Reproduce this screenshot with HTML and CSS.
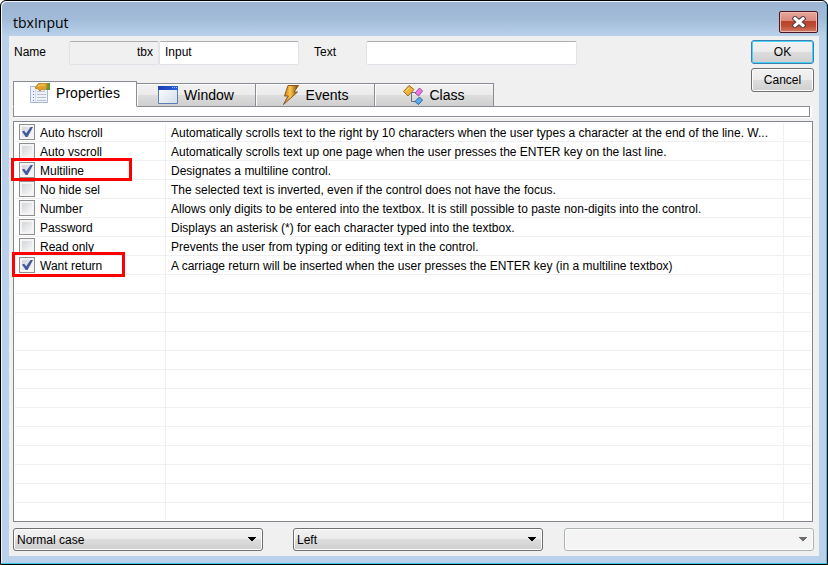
FILE: index.html
```html
<!DOCTYPE html>
<html lang="en">
	<head>
		<meta charset="utf-8">
		<title>tbxInput</title>
		<link rel="stylesheet" href="styles.css">
	</head>
	<body>
		<form class="window">
			<header class="titlebar">
				<h1>tbxInput</h1>
				<button type="button" class="close" aria-label="Close">
					<svg width="14" height="12" viewBox="0 0 14 12"><path d="M3 2.5 L11 9.5 M11 2.5 L3 9.5" stroke="#4f3f48" stroke-width="5" stroke-linecap="square"/><path d="M3 2.5 L11 9.5 M11 2.5 L3 9.5" stroke="#fff" stroke-width="3" stroke-linecap="square"/></svg>
				</button>
			</header>

			<main class="client">
				<div class="top">
					<div class="fields">
						<label class="name-label" for="name">Name</label>
						<input class="prefix" type="text" value="tbx" aria-label="Prefix" readonly>
						<input class="name" id="name" type="text" value="Input">
						<label class="text-label" for="text">Text</label>
						<input class="text" id="text" type="text">
					</div>
					<div class="buttons">
						<button type="submit" class="default">OK</button>
						<button type="button">Cancel</button>
					</div>
				</div>

				<nav class="tabs">
					<button type="button" class="tab active">
						<svg width="20" height="20" viewBox="0 0 20 20">
							<path d="M.5 3.5h17v16H.5z" fill="#eef3fb" stroke="#a9b7cf"/>
							<path d="M5.5 4v15" stroke="#d3dcea"/>
							<path d="M3 8.5h1M3 11.5h1M3 14.5h1M3 17.5h1" stroke="#6f83ad"/>
							<path d="M7 8.5h8M7 11.5h9M7 14.5h9M7 17.5h9" stroke="#b9c1d0"/>
							<path d="M15 0h5v7h-4z" fill="#5c9a34"/>
							<path d="M5 5l3-4 4-1h5v5l-3 2-2-1-2 2-2-2z" fill="#dfa127" stroke="#b98530"/>
							<path d="M8 3l3-1h4" stroke="#f7d26a" fill="none"/>
						</svg>
						Properties
					</button>
					<button type="button" class="tab">
						<svg width="20" height="18" viewBox="0 0 20 18">
							<defs><linearGradient id="bar"><stop offset="0" stop-color="#1c3fb0"/><stop offset="1" stop-color="#2a62dc"/></linearGradient><linearGradient id="pane" x2="1" y2="1"><stop offset="0" stop-color="#fff"/><stop offset="1" stop-color="#d3dcea"/></linearGradient></defs>
							<path d="M.5.5h19v17H.5z" fill="url(#pane)" stroke="#5a7db5"/>
							<path d="M0 0h20v4H0z" fill="url(#bar)"/>
							<path d="M14 1.5h1M16 1.5h1M18 1.5h1" stroke="#9fc0ff"/>
						</svg>
						Window
					</button>
					<button type="button" class="tab">
						<svg width="18" height="20" viewBox="0 0 18 20">
							<defs><linearGradient id="bolt" x2="1" y2="0"><stop offset="0" stop-color="#c9701c"/><stop offset=".45" stop-color="#fbc947"/><stop offset="1" stop-color="#7a3d16"/></linearGradient></defs>
							<path d="M6 .5h10.500L12 7h3.500L1.500 19.500l4-7.500 1-1H2.500z" fill="url(#bolt)" stroke="#8b5424"/>
						</svg>
						Events
					</button>
					<button type="button" class="tab">
						<svg width="20" height="20" viewBox="0 0 20 20">
							<path d="M9 7.500h5M8.500 7v9.500h5" stroke="#66707c" fill="none"/>
							<path d="M6 .5l5 4L5 11 .5 6.500z" fill="#f0b43a" stroke="#9c6e22"/>
							<path d="M2.500 6.500L6 3" stroke="#ffe08d"/>
							<path d="M16.500 3l3 3-4 5-3.500-3z" fill="#e77be0" stroke="#a746a6"/>
							<path d="M16.500 12l3 3-4 4.500-3.500-3z" fill="#55adef" stroke="#26649f"/>
						</svg>
						Class
					</button>
				</nav>
				<div class="strip"></div>

				<div class="list">
					<table>
						<colgroup><col class="col-name"><col><col class="col-end"></colgroup>
						<tbody>
							<tr><td><label><input type="checkbox" checked>Auto hscroll</label></td><td>Automatically scrolls text to the right by 10 characters when the user types a character at the end of the line. W...</td><td></td></tr>
							<tr><td><label><input type="checkbox">Auto vscroll</label></td><td>Automatically scrolls text up one page when the user presses the ENTER key on the last line.</td><td></td></tr>
							<tr><td class="marked"><label><input type="checkbox" checked>Multiline</label></td><td>Designates a multiline control.</td><td></td></tr>
							<tr><td><label><input type="checkbox">No hide sel</label></td><td>The selected text is inverted, even if the control does not have the focus.</td><td></td></tr>
							<tr><td><label><input type="checkbox">Number</label></td><td>Allows only digits to be entered into the textbox. It is still possible to paste non-digits into the control.</td><td></td></tr>
							<tr><td><label><input type="checkbox">Password</label></td><td>Displays an asterisk (*) for each character typed into the textbox.</td><td></td></tr>
							<tr><td><label><input type="checkbox">Read only</label></td><td>Prevents the user from typing or editing text in the control.</td><td></td></tr>
							<tr><td class="marked short"><label><input type="checkbox" checked>Want return</label></td><td>A carriage return will be inserted when the user presses the ENTER key (in a multiline textbox)</td><td></td></tr>
							<tr><td></td><td></td><td></td></tr>
							<tr><td></td><td></td><td></td></tr>
							<tr><td></td><td></td><td></td></tr>
							<tr><td></td><td></td><td></td></tr>
							<tr><td></td><td></td><td></td></tr>
							<tr><td></td><td></td><td></td></tr>
							<tr><td></td><td></td><td></td></tr>
							<tr><td></td><td></td><td></td></tr>
							<tr><td></td><td></td><td></td></tr>
							<tr><td></td><td></td><td></td></tr>
							<tr><td></td><td></td><td></td></tr>
							<tr><td></td><td></td><td></td></tr>
							<tr class="last"><td></td><td></td><td></td></tr>
						</tbody>
					</table>
				</div>

				<div class="options">
					<select aria-label="Case"><option>Normal case</option><option>Uppercase</option><option>Lowercase</option></select>
					<select class="align" aria-label="Alignment"><option>Left</option><option>Center</option><option>Right</option></select>
					<select class="unused" aria-label="Other" disabled></select>
				</div>
			</main>
		</form>
	</body>
</html>
```

FILE: styles.css
```css
* {
    box-sizing: border-box;
}

body {
    margin: 0;
    background: #fff;
    font: 12px "Liberation Sans", Arial, sans-serif;
    color: #000;
}

button, input, select {
    margin: 0;
    font: inherit;
    color: inherit;
}

/* window frame */
.window {
    display: flex;
    flex-direction: column;
    min-height: 100vh;
    padding: 0 8px 8px 7px;
    border: 1px solid #000;
    border-radius: 6px 6px 0 0;
    background: linear-gradient(#9ab4d2, #a2bbd8 18px, #b9d1ea 35px);
    box-shadow: inset -1px -1px 0 #35c5de, inset 1px 1px 0 #eef5fc;
}

.titlebar {
    display: flex;
    justify-content: space-between;
    align-items: flex-start;
    height: 35px;
    padding: 10px 1px 0 5px;
}

h1 {
    margin: 0;
    font: 14px/24px "Open Sans", "Noto Sans", sans-serif;
}

.close {
    display: flex;
    align-items: center;
    justify-content: center;
    width: 39px;
    height: 22px;
    padding: 0;
    border: 1px solid #4b1520;
    border-radius: 2px;
    background: linear-gradient(#e6a79b, #d9897c 45%, #b8432c 45%, #bd4c34 70%, #d47a66);
    box-shadow: inset 0 0 0 1px #ecbcb2;
}

.client {
    display: flex;
    flex-direction: column;
    flex: 1;
    margin-left: 1px;
    padding: 4px 5px 5px 4px;
    background: #f0f0f0;
}

/* name and text fields */
.top {
    display: flex;
    justify-content: space-between;
}

.fields {
    display: flex;
    align-items: flex-start;
    padding-top: 1px;
}

.fields label {
    line-height: 22px;
}

.fields input {
    height: 24px;
    padding: 0 5px 2px;
    border: 1px solid #e2e3ea;
    border-top-color: #abadb3;
    border-radius: 2px;
    background: #fff;
}

.name-label {
    width: 56px;
    padding-left: 1px;
}

.fields .prefix {
    width: 90px;
    background: #f0f0f0;
    text-align: right;
}

.fields .name {
    width: 140px;
}

.text-label {
    width: 67px;
    padding-left: 15px;
}

.fields .text {
    width: 211px;
}

.buttons {
    display: flex;
    flex-direction: column;
    gap: 4px;
    height: 41px;
}

.buttons button {
    flex: none;
    width: 63px;
    height: 24px;
    padding: 0;
    border: 1px solid #707070;
    border-radius: 3px;
    background: linear-gradient(#f2f2f2, #ebebeb 50%, #dddddd 50%, #cfcfcf);
    box-shadow: inset 0 0 0 1px #fcfcfc;
}

.buttons .default {
    border-color: #3c7fb1;
    box-shadow: inset 0 0 0 1px #46d3f4;
}

/* tabs */
.tabs {
    display: flex;
    align-items: flex-end;
    height: 26px;
    margin-bottom: -1px;
}

.tab {
    display: flex;
    align-items: center;
    justify-content: center;
    gap: 6px;
    width: 120px;
    height: 24px;
    margin-left: -1px;
    padding: 0;
    border: 1px solid #898c95;
    background: linear-gradient(#f2f2f2, #ebebeb 50%, #dddddd 50%, #cfcfcf);
    box-shadow: inset 1px 1px 0 #fcfcfc;
    font-size: 14px;
}

.tab.active {
    width: 124px;
    height: 26px;
    margin-left: 0;
    padding-bottom: 2px;
    border-bottom-color: #fff;
    background: #fff;
    z-index: 1;
}

.strip {
    height: 11px;
    margin: 0 4px 4px 0;
    border: 1px solid #898c95;
    background: #fff;
    box-shadow: 2px 1px 0 #fff;
}

/* property list */
.list {
    flex: 1;
    margin-right: 1px;
    padding: 1px 1px 0;
    border: 1px solid #828790;
    background: #fff;
}

table {
    width: 100%;
    border-collapse: separate;
    border-spacing: 0;
    table-layout: fixed;
}

.col-name {
    width: 151px;
}

.col-end {
    width: 27px;
}

td {
    height: 19px;
    padding: 2px 5px 0;
    border-right: 1px solid #f0f0f0;
    border-bottom: 1px solid #f0f0f0;
    line-height: 16px;
    white-space: nowrap;
}

td:first-child {
    padding: 0 4px;
}

td:last-child {
    border-right: 0;
}

.last td {
    height: 17px;
    padding: 0;
    border-bottom: 0;
}

td label {
    display: flex;
    align-items: flex-start;
    gap: 5px;
    height: 18px;
    line-height: 20px;
}

td input {
    appearance: none;
    flex: none;
    width: 16px;
    height: 16px;
    margin-top: 1px;
    padding: 2px;
    border: 1px solid #8e8f8f;
    background: linear-gradient(135deg, #d2d5da, #f8f8f8) content-box, #f4f4f4;
}

td input:checked::before {
    content: "";
    display: block;
    width: 11px;
    height: 10px;
    background: #42599c;
    clip-path: polygon(0 45%, 20% 38%, 38% 62%, 78% 0, 100% 0, 50% 100%, 34% 100%);
}

.marked {
    position: relative;
}

/* red frame lies over the neighbouring rows */
.marked::after {
    content: "";
    position: absolute;
    inset: -3px 33px -2px -4px;
    border: 3px solid #f00;
    z-index: 1;
}

.marked.short::after {
    inset: -4px 40px -3px -3px;
}

/* drop-downs */
.options {
    display: flex;
    padding-top: 6px;
}

select {
    appearance: none;
    flex: 1;
    height: 23px;
    padding: 0 3px;
    border: 1px solid #707070;
    border-radius: 3px;
    background: conic-gradient(from -45deg at 50% 100%, #000 90deg, transparent 0) right 5px center / 10px 5px no-repeat, linear-gradient(#f2f2f2, #ebebeb 50%, #dddddd 50%, #cfcfcf);
    box-shadow: inset 0 0 0 1px #fcfcfc;
}

.align {
    margin-left: 30px;
}

.unused {
    margin-left: 21px;
    border-color: #adb2b5;
    background: conic-gradient(from -45deg at 50% 100%, #6d6d6d 90deg, transparent 0) right 5px center / 10px 5px no-repeat, #f4f4f4;
    opacity: 1;
}
```
